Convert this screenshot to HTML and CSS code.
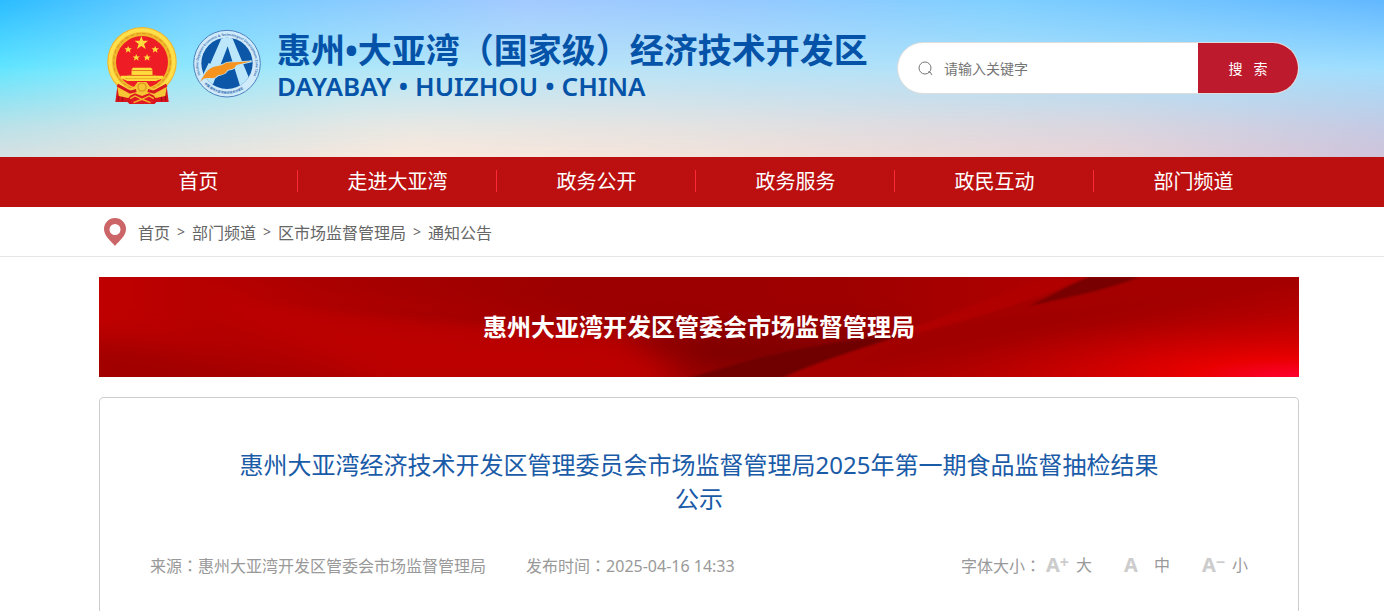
FILE: index.html
```html
<!DOCTYPE html>
<html lang="zh-CN">
<head>
    <meta charset="UTF-8">
    <meta name="viewport" content="width=device-width, initial-scale=1.0">
    <title>惠州大亚湾经济技术开发区</title>
    <link rel="stylesheet" href="styles.css">
</head>
<body>
    <header class="header">
        <div class="container header-inner">
            <a class="brand" href="#">
                <svg class="emblem" viewBox="0 0 206 228" aria-hidden="true">
                    <path d="M32 160 L24 222 L60 222 L66 228 L140 228 L146 222 L182 222 L174 160Z" fill="#d8141c"/>
                    <path d="M36 176l-3 42M46 184l-1 36M160 184l1 36M170 176l3 42" stroke="#a30d16" stroke-width="4" fill="none"/>
                    <circle cx="103" cy="103" r="103" fill="#f3b72b"/>
                    <circle cx="103" cy="103" r="94" fill="none" stroke="#ffdf4a" stroke-width="11"/>
                    <circle cx="103" cy="103" r="84" fill="none" stroke="#d99a1f" stroke-width="3" stroke-dasharray="12 6"/>
                    <circle cx="103" cy="104" r="77" fill="#ee1c25"/>
                    <g fill="#ffdc3c">
                        <path d="M101 27l5 14h15l-12 9 5 15-13-9-13 9 5-15-12-9h15z"/>
                        <path id="star" d="M62 56l3 7h8l-6 5 2 8-7-5-7 5 2-8-6-5h8z"/>
                        <use href="#star" x="80"/>
                        <use href="#star" x="24" y="24"/>
                        <use href="#star" x="56" y="24"/>
                        <path d="M76 121h54l5 7H71zM72 130h62v12H72zM40 144h126v8l-22 8H60l-20-8z"/>
                    </g>
                    <path d="M72 129h62M60 143h84M52 153h102" stroke="#d99a1f" stroke-width="2"/>
                    <path d="M28 166l34 20 18-10 10-13h26l10 13 18 10 34-20-6 38-28 6-14-10-11 12H87l-11-12-14 10-28-6z" fill="#f7c433"/>
                    <path d="M30 172l38 21 18-5M176 172l-38 21-18-5" fill="none" stroke="#d71920" stroke-width="9"/>
                    <circle cx="103" cy="178" r="12" fill="none" stroke="#d99a1f" stroke-width="4"/>
                    <path d="M66 204l16-8 21 8 21-8 16 8-8 24H74z" fill="#e01a22"/>
                    <path d="M68 212l14-8 21 10 21-10 14 8M78 224l25-10 25 10" stroke="#f3b72b" stroke-width="4" fill="none"/>
                </svg>
                <svg class="zone-logo" viewBox="0 0 204 210" aria-hidden="true">
                    <defs>
                        <clipPath id="disc"><circle cx="102" cy="103" r="77"/></clipPath>
                        <path id="arc-top" d="M22 138A86 86 0 1 1 182 138"/>
                        <path id="arc-bottom" d="M34 164A92 92 0 0 0 170 164"/>
                    </defs>
                    <circle cx="102" cy="104" r="100" fill="#cfeafa" stroke="#4d82bd" stroke-width="3"/>
                    <circle cx="102" cy="103" r="77" fill="#0c57a7"/>
                    <g clip-path="url(#disc)">
                        <path d="M86 22h30l66 158h-38L104 52 60 166H16z" fill="#bce7fb"/>
                        <path d="M24 92L86 26 52 104z" fill="#0c57a7"/>
                    </g>
                    <path d="M22 158c12-21 20-37 39-44 14-5 20-2 32-9 9-6 16-4 29-5l54-3-43 10c-7 2-4 8-14 12-9 4-14 0-19 9-8 13-25 5-31 16-10 8-26-1-37 5z" fill="#f79420" stroke="#bce7fb" stroke-width="5" paint-order="stroke"/>
                    <text class="ring-text" font-size="10"><textPath href="#arc-top">Huizhou Dayawan Economic &amp; Technological Development Zone China</textPath></text>
                    <text class="ring-text" font-size="9"><textPath href="#arc-bottom">中国·惠州大亚湾经济技术开发区</textPath></text>
                </svg>
                <span class="brand-text">
                    <span class="brand-cn">惠州•大亚湾（国家级）经济技术开发区</span>
                    <span class="brand-en">DAYABAY • HUIZHOU • CHINA</span>
                </span>
            </a>
            <form class="search">
                <svg class="search-icon" viewBox="0 0 16 16" aria-hidden="true">
                    <circle cx="7" cy="8" r="6"/>
                    <path d="M10 12h2l2 3"/>
                </svg>
                <input class="search-input" type="text" placeholder="请输入关键字" aria-label="请输入关键字">
                <button class="search-btn" type="button">搜&nbsp;&nbsp;&nbsp;索</button>
            </form>
        </div>
    </header>

    <nav class="nav">
        <div class="container nav-list">
            <a href="#">首页</a>
            <a href="#">走进大亚湾</a>
            <a href="#">政务公开</a>
            <a href="#">政务服务</a>
            <a href="#">政民互动</a>
            <a href="#">部门频道</a>
        </div>
    </nav>

    <div class="crumbs">
        <div class="container crumbs-inner">
            <svg class="pin" viewBox="0 0 22 28" aria-hidden="true">
                <path fill-rule="evenodd" d="M11 0a11 11 0 0 1 11 11c0 7-7 12-11 17C7 23 0 18 0 11A11 11 0 0 1 11 0zm0 6a5 5 0 1 0 0 11 5 5 0 0 0 0-11z" fill="#cb6567"/>
            </svg>
            <a href="#">首页</a>
            <span>&gt;</span>
            <a href="#">部门频道</a>
            <span>&gt;</span>
            <a href="#">区市场监督管理局</a>
            <span>&gt;</span>
            <a href="#">通知公告</a>
        </div>
    </div>

    <main class="main">
        <div class="container">
            <div class="banner">
                <svg class="banner-art" viewBox="0 0 1200 100" preserveAspectRatio="none" aria-hidden="true">
                    <defs>
                        <linearGradient id="base">
                            <stop offset="0" stop-color="#c00000"/>
                            <stop offset=".2" stop-color="#a80000"/>
                            <stop offset=".4" stop-color="#9c0000"/>
                            <stop offset=".62" stop-color="#9e0000"/>
                            <stop offset=".8" stop-color="#b00000"/>
                            <stop offset="1" stop-color="#b40000"/>
                        </linearGradient>
                        <linearGradient id="sheet" x1="0" y1="0" x2="1" y2="1">
                            <stop offset="0" stop-color="#8c0000"/>
                            <stop offset=".45" stop-color="#a00000"/>
                            <stop offset=".8" stop-color="#e00000"/>
                            <stop offset="1" stop-color="#ff0028"/>
                        </linearGradient>
                        <radialGradient id="glow">
                            <stop offset="0" stop-color="#ff0030"/>
                            <stop offset=".3" stop-color="#e80000"/>
                            <stop offset="1" stop-color="#c00000" stop-opacity="0"/>
                        </radialGradient>
                        <filter id="edge"><feGaussianBlur stdDeviation="1"/></filter>
                        <filter id="soft"><feGaussianBlur stdDeviation="4"/></filter>
                        <filter id="wide" x="-20%" y="-50%" width="140%" height="200%"><feGaussianBlur stdDeviation="14"/></filter>
                    </defs>
                    <rect width="1200" height="100" fill="url(#base)"/>
                    <path d="M100 10C260 35 420 50 600 60L560 120H300C220 80 100 50 100 10z" fill="#bc0000" filter="url(#wide)"/>
                    <path d="M-20 60C80 70 160 90 240 120H-20z" fill="#a00000" filter="url(#wide)"/>
                    <path d="M150 18C260 40 420 52 620 50L600 34C440 44 280 36 150 18z" fill="#980000" opacity=".6" filter="url(#soft)"/>
                    <path d="M520 50C620 60 720 60 820 48L760 76 640 96 560 80z" fill="#740000" opacity=".8" filter="url(#wide)"/>
                    <path d="M590 100C660 82 720 70 820 54L960 0H1210V110H590z" fill="#a40000" filter="url(#edge)"/>
                    <path d="M586 102C660 78 720 66 810 56 760 72 720 84 680 102z" fill="#700000" filter="url(#edge)"/>
                    <path d="M700 110C790 66 850 45 940 36S1080 18 1220 4V110z" fill="url(#sheet)" opacity=".6" filter="url(#soft)"/>
                    <path d="M790 58C850 40 890 20 950 0h40C930 25 880 40 810 58z" fill="#b00000" filter="url(#edge)"/>
                    <path d="M930 29C950 20 965 10 990 0h50C1010 12 980 18 930 29z" fill="#780000" filter="url(#edge)"/>
                    <ellipse cx="1200" cy="100" rx="360" ry="64" fill="url(#glow)"/>
                </svg>
                <h2 class="banner-title">惠州大亚湾开发区管委会市场监督管理局</h2>
            </div>

            <article class="article">
                <h1 class="article-title">惠州大亚湾经济技术开发区管理委员会市场监督管理局2025年第一期食品监督抽检结果公示</h1>
                <div class="article-meta">
                    <span>来源<span class="colon" lang="zh-TW">：</span>惠州大亚湾开发区管委会市场监督管理局</span>
                    <span>发布时间<span class="colon" lang="zh-TW">：</span>2025-04-16 14:33</span>
                    <div class="font-size">
                        <span class="font-label">字体大小<span class="colon" lang="zh-TW">：</span></span>
                        <button type="button"><b>A<sup>+</sup></b>大</button>
                        <button type="button"><b>A</b>中</button>
                        <button type="button"><b>A<sup>−</sup></b>小</button>
                    </div>
                </div>
            </article>
        </div>
    </main>
</body>
</html>
```

FILE: styles.css
```css
* {
    margin: 0;
    padding: 0;
    box-sizing: border-box;
}

body {
    font-family: "Noto Sans", "Noto Sans CJK SC", sans-serif;
    font-size: 16px;
    color: #666;
    background: #fff;
}

a {
    color: inherit;
    text-decoration: none;
}

button,
input {
    font: inherit;
    border: none;
    background: none;
}

.header,
.nav,
.crumbs,
.main {
    padding: 0 85px 0 99px;
}

.container {
    max-width: 1200px;
    margin: 0 auto;
}

/* Header: three horizontal colour bands faded into each other */
.header {
    position: relative;
    background: linear-gradient(to right, #2cbcff 0%, #70ccff 14%, #a4caff 38%, #94caff 55%, #80d0ff 72%, #62b8ff 100%);
}

.header::before,
.header::after {
    content: "";
    position: absolute;
    inset: 0;
}

.header::before {
    background: linear-gradient(to right, #62e6ff 0%, #80e8ff 8%, #aee8fa 25%, #b8e4f8 45%, #b0e2fa 70%, #a0e0ff 100%);
    mask-image: linear-gradient(to bottom, transparent 0%, #000 45%);
}

.header::after {
    background: linear-gradient(to right, #d6e0e2 0%, #fae8dc 30%, #f2e2da 50%, #e8d2d6 80%, #cfc3db 100%);
    mask-image: linear-gradient(to bottom, transparent 42%, rgba(0, 0, 0, 0.75) 80%, #000 100%);
}

.header-inner {
    position: relative;
    z-index: 1;
    display: flex;
    justify-content: space-between;
    align-items: flex-start;
    height: 157px;
}

.brand {
    display: flex;
    padding: 27px 0 0 8px;
    color: #0453a8;
}

.emblem {
    width: 70px;
    height: 77px;
}

.zone-logo {
    width: 68px;
    height: 70px;
    margin: 2px 16px 0;
}

.ring-text {
    fill: #2f69ad;
    font-weight: 600;
}

.brand-text {
    display: flex;
    flex-direction: column;
    white-space: nowrap;
}

.brand-cn {
    font-size: 34px;
    font-weight: 700;
    line-height: 46px;
}

.brand-en {
    font-size: 26px;
    font-weight: 600;
    line-height: 26px;
}

.search {
    display: flex;
    align-items: center;
    width: 402px;
    height: 52px;
    margin-top: 42px;
    padding-left: 20px;
    border: 1px solid #ddd;
    border-radius: 26px;
    background: #fff;
    overflow: hidden;
    font-size: 14px;
}

.search-icon {
    width: 16px;
    height: 16px;
    fill: none;
    stroke: #777;
}

.search-input {
    flex: 1;
    min-width: 0;
    padding: 0 10px;
    outline: none;
}

.search-input::placeholder {
    color: #757575;
}

.search-btn {
    width: 100px;
    height: 100%;
    background: #bd1a2d;
    color: #fff;
}

/* Main navigation */
.nav {
    background: #bc1010;
}

.nav-list {
    display: grid;
    grid-template-columns: repeat(6, 1fr);
    padding-right: 6px;
}

.nav-list a {
    color: #fff;
    font-size: 20px;
    line-height: 50px;
    text-align: center;
    background: linear-gradient(#ff2a38, #ff2a38) right 13px / 1px 22px no-repeat;
}

.nav-list a:last-child {
    background: none;
}

/* Breadcrumbs */
.crumbs {
    border-bottom: 1px solid #e6e6e6;
}

.crumbs-inner {
    display: flex;
    align-items: center;
    gap: 7px;
    height: 49px;
    padding-left: 5px;
}

.pin {
    width: 22px;
    height: 28px;
    margin-right: 5px;
}

.crumbs span {
    font-size: 14px;
}

/* Department banner */
.banner {
    display: grid;
    align-items: center;
    height: 100px;
    margin-top: 20px;
}

.banner-art,
.banner-title {
    grid-area: 1 / 1;
}

.banner-art {
    width: 100%;
    height: 100px;
}

.banner-title {
    position: relative;
    color: #fff;
    font-size: 24px;
    line-height: 36px;
    text-align: center;
}

/* Article */
.article {
    margin-top: 20px;
    padding: 50px 50px 30px;
    border: 1px solid #ccc;
    border-bottom: none;
    border-radius: 5px 5px 0 0;
}

.article-title {
    padding: 0 80px;
    color: #1a5ba8;
    font-size: 24px;
    font-weight: 400;
    line-height: 34px;
    text-align: center;
}

.article-meta {
    display: flex;
    gap: 40px;
    margin-top: 34px;
    color: #999;
    line-height: 30px;
}

.colon {
    font-family: "Noto Sans CJK TC", sans-serif;
}

.font-size {
    display: flex;
    margin-left: auto;
}

.font-label {
    margin-right: 5px;
}

.font-size button {
    display: flex;
    width: 78px;
    color: #999;
    line-height: 30px;
    cursor: pointer;
}

.font-size button:last-child {
    width: 46px;
}

.font-size b {
    width: 30px;
    color: #ccc;
    font-size: 20px;
    text-align: left;
}

.font-size sup {
    font-size: 16px;
    line-height: 0;
    vertical-align: 4px;
}
```
